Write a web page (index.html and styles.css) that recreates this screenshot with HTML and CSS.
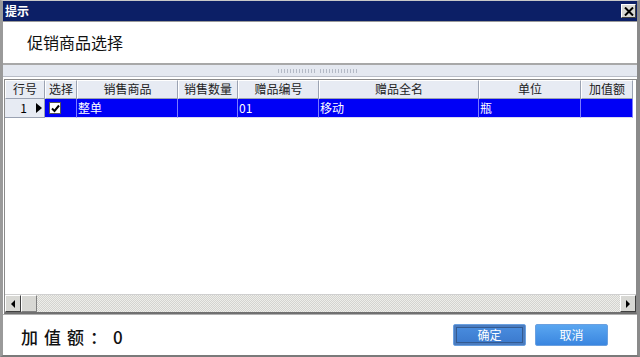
FILE: index.html
```html
<!DOCTYPE html>
<html>
<head>
<meta charset="utf-8">
<link rel="stylesheet" href="styles.css">
</head>
<body>
<div class="window">
  <div class="titlebar">
    <span class="title">提示</span>
    <span class="close">
      <svg width="10" height="9" viewBox="0 0 10 9"><path d="M1 0.5 L9 8.5 M9 0.5 L1 8.5" stroke="#000" stroke-width="2"/></svg>
    </span>
  </div>
  <div class="head">促销商品选择</div>
  <div class="splitter"><span class="grip"></span><span class="grip"></span></div>
  <div class="grid">
    <div class="cols hdr">
      <div class="c">行号</div><div class="c">选择</div><div class="c">销售商品</div><div class="c">销售数量</div><div class="c">赠品编号</div><div class="c">赠品全名</div><div class="c">单位</div><div class="c">加值额</div>
    </div>
    <div class="cols row">
      <div class="c num">1<span class="tri"></span></div>
      <div class="c chk"><span class="box"><svg width="9" height="9" viewBox="0 0 9 9"><path d="M1 4.5 L3.5 7 L8 1.5" fill="none" stroke="#000" stroke-width="2"/></svg></span></div>
      <div class="c d">整单</div><div class="c d"></div><div class="c d">01</div><div class="c d">移动</div><div class="c d">瓶</div><div class="c d"></div>
    </div>
    <div class="body"></div>
    <div class="hscroll">
      <span class="sbtn"><span class="al"></span></span>
      <span class="thumb"></span>
      <span class="track"></span>
      <span class="sbtn"><span class="ar"></span></span>
    </div>
  </div>
  <div class="foot">
    <span class="total"><span class="lbl">加值额：</span><span class="val">0</span></span>
    <div class="btns">
      <button class="btn focus">确定</button>
      <button class="btn">取消</button>
    </div>
  </div>
</div>
</body>
</html>
```
FILE: styles.css
```css
* { box-sizing: border-box; }
html, body { margin: 0; padding: 0; }
body { width: 640px; height: 357px; overflow: hidden; background: #fff; font-family: "Noto Sans CJK SC", "Noto Sans", sans-serif; }
.window { width: 640px; height: 357px; display: flex; flex-direction: column; border-left: 3px solid #9a9a9a; border-right: 3px solid #8a8a8a; border-bottom: 2px solid #7a7a7a; border-top: 1px solid #c8c8c8; background: #fff; }
.titlebar { height: 20px; flex: none; background: #0c1f66; display: flex; align-items: center; justify-content: space-between; padding: 0 1px 0 2px; }
.title { color: #fff; font-weight: bold; font-size: 12px; line-height: 20px; }
.close { width: 15px; height: 14px; background: #d8d8d4; border: 1px solid; border-color: #fff #404040 #404040 #fff; display: flex; align-items: center; justify-content: center; }
.head { height: 44px; flex: none; border-bottom: 2px solid #a8a8a8; border-top: 1px solid #9a9a9a; font-size: 16px; color: #111; padding-left: 24px; line-height: 40px; }
.splitter { height: 12px; flex: none; background: #e4e8f0; border-bottom: 1px solid #b8bcc6; display: flex; justify-content: center; align-items: center; gap: 4px; padding-right: 4px; }
.grip { width: 38px; height: 4px; background-image: repeating-linear-gradient(90deg, #b4bac6 0 1px, transparent 1px 3px); }
.grid { flex: 1; display: flex; flex-direction: column; margin: 2px 0 0 1px; border: 1px solid #8a8a8a; border-bottom: 2px solid #707070; }
.cols { display: grid; grid-template-columns: 40px 32px 101px 60px 81px 160px 102px 52px; }
.hdr { height: 19px; }
.hdr .c { background: #e7ebf3; border-right: 1px solid #9aa2b2; border-bottom: 1px solid #9aa2b2; border-top: 1px solid #fff; border-left: 1px solid #fff; font-size: 12px; line-height: 16px; text-align: center; color: #222; }
.row { height: 19px; }
.row .c { font-size: 12px; line-height: 18px; color: #fff; background: #0000f6; border-right: 1px solid #7b7bff; border-bottom: 1px solid #d8d8f0; padding-left: 1px; }
.row .num { background: #e7ebf3; color: #000; border-right: 1px solid #9aa2b2; border-bottom: 1px solid #9aa2b2; display: flex; justify-content: flex-end; align-items: center; gap: 9px; padding-right: 2px; }
.tri { width: 0; height: 0; border-top: 5px solid transparent; border-bottom: 5px solid transparent; border-left: 6px solid #000; }
.row .chk { display: flex; align-items: center; padding-left: 4px; }
.box { width: 12px; height: 12px; background: #fff; border: 1px solid #555; display: flex; align-items: center; justify-content: center; }
.body { flex: 1; }
.hscroll { height: 18px; display: flex; flex: none; border-top: 1px solid #d0d0d0; }
.sbtn { width: 16px; height: 17px; background: #d8d8d4; border: 1px solid; border-color: #fff #404040 #404040 #fff; display: flex; align-items: center; justify-content: center; }
.thumb { width: 16px; height: 17px; background: #d8d8d4; border: 1px solid; border-color: #fff #808080 #808080 #fff; }
.track { flex: 1; background-color: #eeeeea; background-image: repeating-conic-gradient(#d4d4d0 0 25%, #eeeeea 0 50%); background-size: 2px 2px; }
.al { width: 0; height: 0; border-top: 4px solid transparent; border-bottom: 4px solid transparent; border-right: 4px solid #000; }
.ar { width: 0; height: 0; border-top: 4px solid transparent; border-bottom: 4px solid transparent; border-left: 4px solid #000; }
.foot { height: 41px; flex: none; display: flex; align-items: center; justify-content: space-between; padding: 0 29px 0 18px; border-top: 1px solid #b0b0b0; }
.total { font-size: 17px; color: #111; margin-top: 2px; font-weight: 500; }
.lbl { letter-spacing: 6px; }
.val { margin-left: 0; }
.btns { display: flex; gap: 9px; }
.btn { width: 73px; height: 22px; border: 1px solid #6aa0e0; border-radius: 2px; background: linear-gradient(#5aa6f0, #3a86e0); color: #fff; font-family: "Noto Sans CJK SC", sans-serif; font-size: 12px; padding: 0; line-height: 18px; }
.btn.focus { background: linear-gradient(#4a8ee0, #3a78cc); box-shadow: inset 0 0 0 2px #4a7cc0, inset 0 0 0 3px #335a90; }
```
